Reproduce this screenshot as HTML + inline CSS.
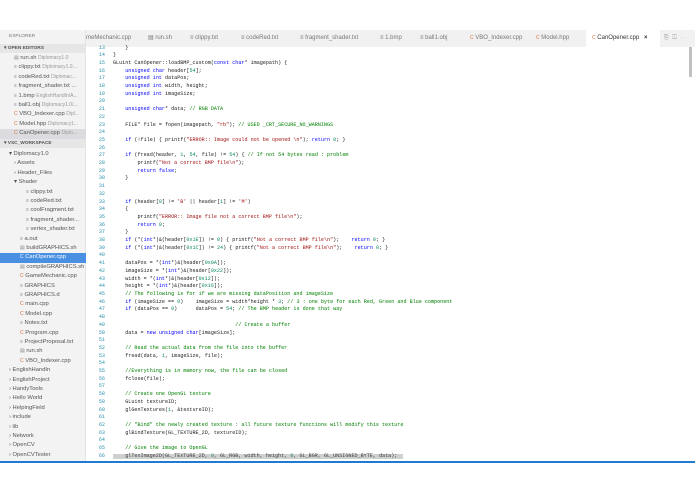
<!DOCTYPE html>
<html><head><meta charset="utf-8"><style>
*{margin:0;padding:0;box-sizing:border-box}
body{width:695px;height:494px;background:#fff;position:relative;overflow:hidden;font-family:"Liberation Sans",sans-serif}
#side{position:absolute;left:0;top:30px;width:86px;height:432px;background:#f3f3f3;border-right:1px solid #e4e4e4}
.r{position:absolute;left:0;width:86px;height:9.4px;font-size:5.8px;line-height:9.4px;color:#555;white-space:nowrap;overflow:hidden}
.h{font-weight:bold;font-size:4.8px;color:#555;background:#e6e6e6}
.sel{background:#4a90e2;color:#fff}
.act{background:#dcdce0}
.g{color:#999;font-size:5px}
.ic{color:#888;font-size:5px}
.cp{color:#d8703c;font-size:5px}
#tabs{position:absolute;left:86px;top:30px;width:609px;height:17px;background:#f1f1f1;font-size:6px;color:#777;white-space:nowrap}
.t{position:absolute;top:0;height:17px;line-height:17px}
#nums,#code{position:absolute;top:44.5px;font-family:"Liberation Mono",monospace;font-size:5.1px;line-height:7.7px;white-space:pre}
#nums{left:88px;width:17px;text-align:right;color:#2b91af}
#code{left:113px;color:#222}
.k{color:#0000ff}.c{color:#008000}.s{color:#a31515}.n{color:#09885a}
</style></head><body>
<div id="side">
<div class="r" style="top:2px;padding-left:9px;font-size:4.8px;color:#777">EXPLORER</div>
<div class="r h" style="top:14px;padding-left:4px">▾ OPEN EDITORS</div>
<div class="r" style="top:24px;padding-left:14px"><span class="ic">▤</span> run.sh <span class="g">Diplomacy1.0</span></div>
<div class="r" style="top:33.4px;padding-left:14px"><span class="ic">≡</span> clippy.txt <span class="g">Diplomacy1.0...</span></div>
<div class="r" style="top:42.8px;padding-left:14px"><span class="ic">≡</span> codeRed.txt <span class="g">Diplomac...</span></div>
<div class="r" style="top:52.2px;padding-left:14px"><span class="ic">≡</span> fragment_shader.txt ...</div>
<div class="r" style="top:61.6px;padding-left:14px"><span class="ic">≡</span> 1.bmp <span class="g">EnglishHandIn/A...</span></div>
<div class="r" style="top:71px;padding-left:14px"><span class="ic">≡</span> ball1.obj <span class="g">Diplomacy1.0/...</span></div>
<div class="r" style="top:80.4px;padding-left:14px"><span class="cp">C</span> VBO_Indexer.cpp <span class="g">Dipl...</span></div>
<div class="r" style="top:89.8px;padding-left:14px"><span class="cp">C</span> Model.hpp <span class="g">Diplomacy1...</span></div>
<div class="r act" style="top:99.2px;padding-left:14px"><span class="cp">C</span> CanOpener.cpp <span class="g">Diplo...</span></div>
<div class="r h" style="top:108.6px;padding-left:4px">▾ VSC_WORKSPACE</div>
<div class="r" style="top:120px;padding-left:9px">▾ Diplomacy1.0</div>
<div class="r" style="top:129.4px;padding-left:14px">› Assets</div>
<div class="r" style="top:138.8px;padding-left:14px">› Header_Files</div>
<div class="r" style="top:148.2px;padding-left:14px">▾ Shader</div>
<div class="r" style="top:157.6px;padding-left:26px"><span class="ic">≡</span> clippy.txt</div>
<div class="r" style="top:167px;padding-left:26px"><span class="ic">≡</span> codeRed.txt</div>
<div class="r" style="top:176.4px;padding-left:26px"><span class="ic">≡</span> coolFragment.txt</div>
<div class="r" style="top:185.8px;padding-left:26px"><span class="ic">≡</span> fragment_shader...</div>
<div class="r" style="top:195.2px;padding-left:26px"><span class="ic">≡</span> vertex_shader.txt</div>
<div class="r" style="top:204.6px;padding-left:20px"><span class="ic">≡</span> a.out</div>
<div class="r" style="top:214px;padding-left:20px"><span class="ic">▤</span> buildGRAPHICS.sh</div>
<div class="r sel" style="top:223.4px;padding-left:20px"><span style="font-size:5px">C</span> CanOpener.cpp</div>
<div class="r" style="top:232.8px;padding-left:20px"><span class="ic">▤</span> compileGRAPHICS.sh</div>
<div class="r" style="top:242.2px;padding-left:20px"><span class="cp">C</span> GameMechanic.cpp</div>
<div class="r" style="top:251.6px;padding-left:20px"><span class="ic">≡</span> GRAPHICS</div>
<div class="r" style="top:261px;padding-left:20px"><span class="ic">≡</span> GRAPHICS.d</div>
<div class="r" style="top:270.4px;padding-left:20px"><span class="cp">C</span> main.cpp</div>
<div class="r" style="top:279.8px;padding-left:20px"><span class="cp">C</span> Model.cpp</div>
<div class="r" style="top:289.2px;padding-left:20px"><span class="ic">≡</span> Notes.txt</div>
<div class="r" style="top:298.6px;padding-left:20px"><span class="cp">C</span> Program.cpp</div>
<div class="r" style="top:308px;padding-left:20px"><span class="ic">≡</span> ProjectProposal.txt</div>
<div class="r" style="top:317.4px;padding-left:20px"><span class="ic">▤</span> run.sh</div>
<div class="r" style="top:326.8px;padding-left:20px"><span class="cp">C</span> VBO_Indexer.cpp</div>
<div class="r" style="top:336.2px;padding-left:9px">› EnglishHandIn</div>
<div class="r" style="top:345.6px;padding-left:9px">› EnglishProject</div>
<div class="r" style="top:355px;padding-left:9px">› HandyTools</div>
<div class="r" style="top:364.4px;padding-left:9px">› Hello World</div>
<div class="r" style="top:373.8px;padding-left:9px">› HelpingField</div>
<div class="r" style="top:383.2px;padding-left:9px">› include</div>
<div class="r" style="top:392.6px;padding-left:9px">› lib</div>
<div class="r" style="top:402px;padding-left:9px">› Network</div>
<div class="r" style="top:411.4px;padding-left:9px">› OpenCV</div>
<div class="r" style="top:420.8px;padding-left:9px">› OpenCVTester</div>
</div>
<div id="tabs">
<span class="t" style="left:0">meMechanic.cpp</span>
<span class="t" style="left:62px">▤ run.sh</span>
<span class="t" style="left:104px">≡ clippy.txt</span>
<span class="t" style="left:155px">≡ codeRed.txt</span>
<span class="t" style="left:214px">≡ fragment_shader.txt</span>
<span class="t" style="left:294px">≡ 1.bmp</span>
<span class="t" style="left:334px">≡ ball1.obj</span>
<span class="t" style="left:384px"><span class="cp">C</span> VBO_Indexer.cpp</span>
<span class="t" style="left:450px"><span class="cp">C</span> Model.hpp</span>
<span class="t" style="left:500px;width:74px;background:#fff;padding-left:6px;color:#333"><span class="cp">C</span> CanOpener.cpp <b style="margin-left:3px">×</b></span>
<span class="t" style="left:578px;color:#999">⎘ &nbsp;◫ &nbsp;⋯</span>
</div>
<pre id="nums">13
14
15
16
17
18
19
20
21
22
23
24
25
26
27
28
29
30
31
32
33
34
35
36
37
38
39
40
41
42
43
44
45
46
47
48
49
50
51
52
53
54
55
56
57
58
59
60
61
62
63
64
65
66</pre>
<pre id="code">    }
}
GLuint CanOpener::loadBMP_custom(<span class="k">const</span> <span class="k">char</span>* imagepath) {
    <span class="k">unsigned</span> <span class="k">char</span> header[<span class="n">54</span>];
    <span class="k">unsigned</span> <span class="k">int</span> dataPos;
    <span class="k">unsigned</span> <span class="k">int</span> width, height;
    <span class="k">unsigned</span> <span class="k">int</span> imageSize;

    <span class="k">unsigned</span> <span class="k">char</span>* data; <span class="c">// RGB DATA</span>

    FILE* file = fopen(imagepath, <span class="s">"rb"</span>); <span class="c">// USED _CRT_SECURE_NO_WARNINGS</span>

    <span class="k">if</span> (!file) { printf(<span class="s">"ERROR:: Image could not be opened \n"</span>); <span class="k">return</span> <span class="n">0</span>; }

    <span class="k">if</span> (fread(header, <span class="n">1</span>, <span class="n">54</span>, file) != <span class="n">54</span>) { <span class="c">// If not 54 bytes read : problem</span>
        printf(<span class="s">"Not a correct BMP file\n"</span>);
        <span class="k">return</span> <span class="k">false</span>;
    }


    <span class="k">if</span> (header[<span class="n">0</span>] != <span class="s">'B'</span> || header[<span class="n">1</span>] != <span class="s">'M'</span>)
    {
        printf(<span class="s">"ERROR:: Image file not a correct BMP file\n"</span>);
        <span class="k">return</span> <span class="n">0</span>;
    }
    <span class="k">if</span> (*(<span class="k">int</span>*)&amp;(header[<span class="n">0x1E</span>]) != <span class="n">0</span>) { printf(<span class="s">"Not a correct BMP file\n"</span>);    <span class="k">return</span> <span class="n">0</span>; }
    <span class="k">if</span> (*(<span class="k">int</span>*)&amp;(header[<span class="n">0x1C</span>]) != <span class="n">24</span>) { printf(<span class="s">"Not a correct BMP file\n"</span>);    <span class="k">return</span> <span class="n">0</span>; }

    dataPos = *(<span class="k">int</span>*)&amp;(header[<span class="n">0x0A</span>]);
    imageSize = *(<span class="k">int</span>*)&amp;(header[<span class="n">0x22</span>]);
    width = *(<span class="k">int</span>*)&amp;(header[<span class="n">0x12</span>]);
    height = *(<span class="k">int</span>*)&amp;(header[<span class="n">0x16</span>]);
    <span class="c">// The following is for if we are missing dataPosition and imageSize</span>
    <span class="k">if</span> (imageSize == <span class="n">0</span>)    imageSize = width*height * <span class="n">3</span>; <span class="c">// 3 : one byte for each Red, Green and Blue component</span>
    <span class="k">if</span> (dataPos == <span class="n">0</span>)      dataPos = <span class="n">54</span>; <span class="c">// The BMP header is done that way</span>

                                        <span class="c">// Create a buffer</span>
    data = <span class="k">new</span> <span class="k">unsigned</span> <span class="k">char</span>[imageSize];

    <span class="c">// Read the actual data from the file into the buffer</span>
    fread(data, <span class="n">1</span>, imageSize, file);

    <span class="c">//Everything is in memory now, the file can be closed</span>
    fclose(file);

    <span class="c">// Create one OpenGL texture</span>
    GLuint textureID;
    glGenTextures(<span class="n">1</span>, &amp;textureID);

    <span class="c">// "Bind" the newly created texture : all future texture functions will modify this texture</span>
    glBindTexture(GL_TEXTURE_2D, textureID);

    <span class="c">// Give the image to OpenGL</span>
    glTexImage2D(GL_TEXTURE_2D, <span class="n">0</span>, GL_RGB, width, height, <span class="n">0</span>, GL_BGR, GL_UNSIGNED_BYTE, data);</pre>
<div style="position:absolute;left:113px;top:454px;width:290px;height:5px;background:rgba(120,120,120,.35)"></div>
<div style="position:absolute;left:689px;top:47px;width:3px;height:30px;background:rgba(100,100,100,.4)"></div>
<div style="position:absolute;left:0;top:461px;width:695px;height:1.5px;background:#1f7ad1"></div>
</body></html>
